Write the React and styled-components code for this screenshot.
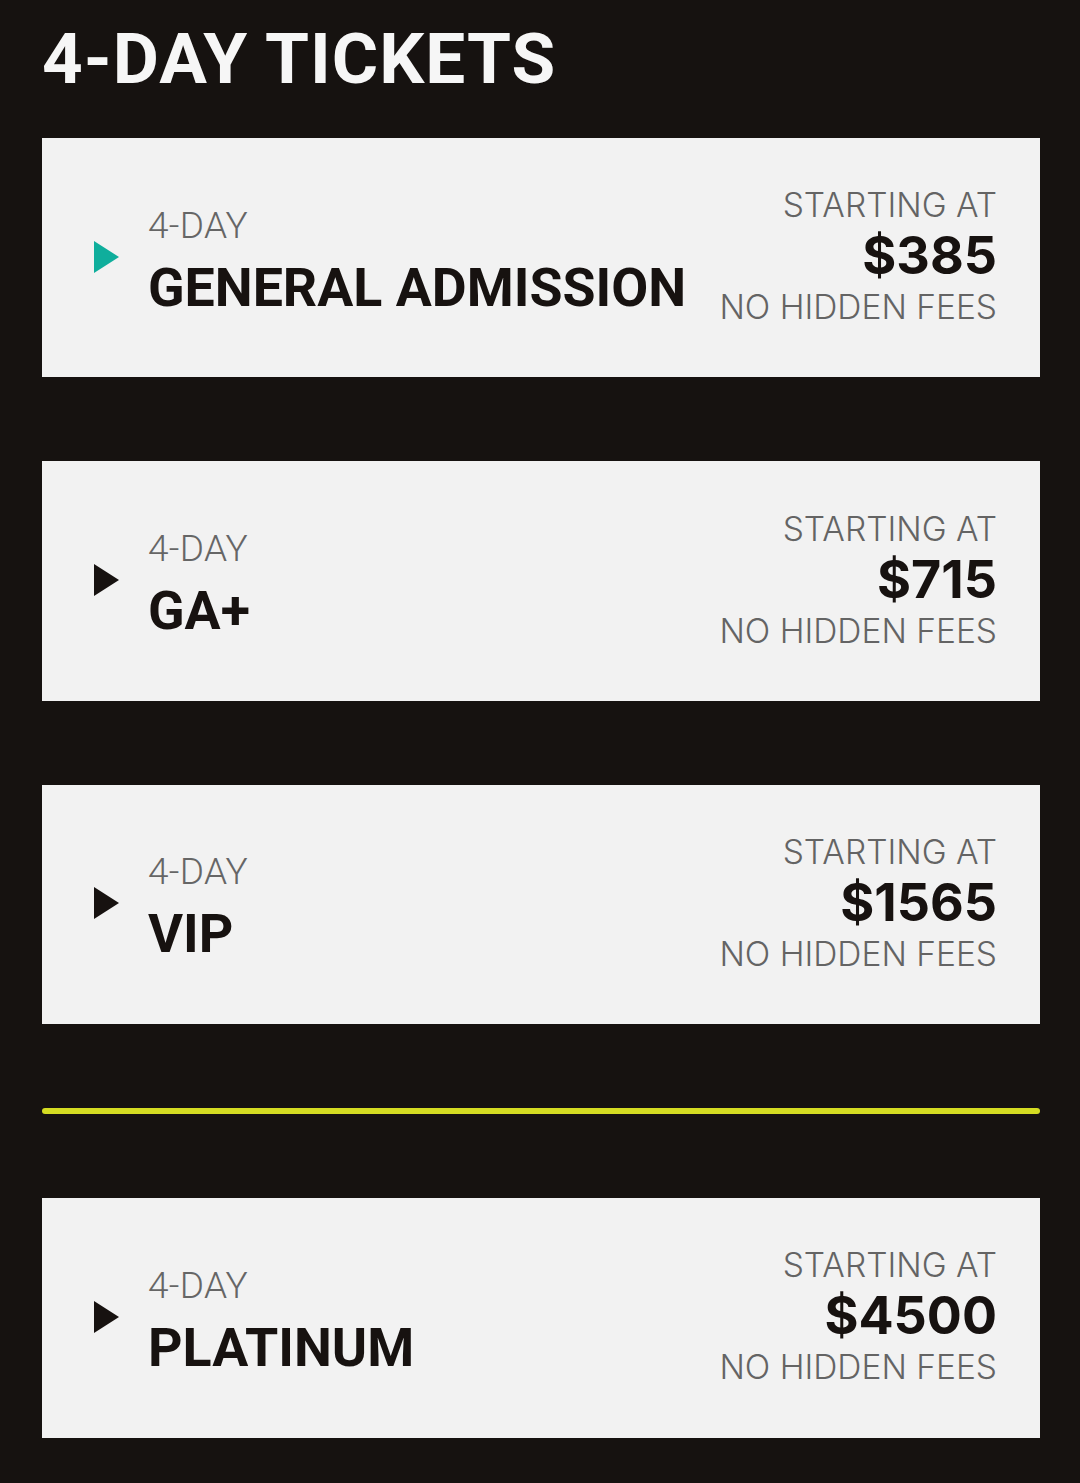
import React from "react";
import styled, { createGlobalStyle } from "styled-components";

const Global = createGlobalStyle`
  html, body { margin: 0; padding: 0; background: #161210; }
  body { font-family: Roboto, "Liberation Sans", sans-serif; }
`;

const Page = styled.main`
  width: 1080px;
  min-height: 1483px;
  box-sizing: border-box;
  padding: 16px 40px 46px 42px;
  background: #161210;
`;

const Title = styled.h1`
  margin: 0 0 36px;
  font-family: Roboto, "Liberation Sans", sans-serif;
  font-weight: 700;
  font-size: 71px;
  line-height: 86px;
  letter-spacing: 1px;
  color: #f6f6f6;
`;

const List = styled.div`
  display: flex;
  flex-direction: column;
  gap: 84px;
`;

const Card = styled.div`
  height: 239.4px;
  background: #f2f2f2;
  display: flex;
  align-items: center;
  justify-content: space-between;
  padding: 0 43px 0 52px;
  box-sizing: border-box;
`;

const Left = styled.div`
  display: flex;
  align-items: center;
  gap: 29px;
`;

const Arrow = styled.span`
  width: 0;
  height: 0;
  border-top: 16.5px solid transparent;
  border-bottom: 16.5px solid transparent;
  border-left: 25px solid ${(p) => (p.$active ? "#0fae9c" : "#171210")};
  flex: none;
  margin-top: -2px;
`;

const Names = styled.div`
  display: flex;
  flex-direction: column;
  padding-top: 12px;
`;

const Kicker = styled.span`
  font-family: Roboto, sans-serif;
  font-weight: 300;
  font-size: 37px;
  line-height: 44px;
  letter-spacing: 0.3px;
  color: #666666;
`;

const Name = styled.span`
  font-family: Roboto, sans-serif;
  font-weight: 700;
  font-size: 53.7px;
  line-height: 72px;
  margin-top: 4px;
  color: #171210;
`;

const Right = styled.div`
  display: flex;
  flex-direction: column;
  align-items: flex-end;
  text-align: right;
  margin-top: -3px;
`;

const Small = styled.span`
  font-family: Inter, sans-serif;
  font-weight: 300;
  font-size: 33.5px;
  line-height: 42px;
  color: #646464;
`;

const Price = styled.span`
  font-family: Inter, sans-serif;
  font-weight: 700;
  font-size: 52px;
  line-height: 60px;
  color: #171210;
`;

const Divider = styled.hr`
  margin: 0;
  border: none;
  height: 6px;
  border-radius: 3px;
  background: #d4dc22;
`;

const tickets = [
  { name: "GENERAL ADMISSION", price: "$385", active: true },
  { name: "GA+", price: "$715" },
  { name: "VIP", price: "$1565" },
  { divider: true },
  { name: "PLATINUM", price: "$4500" },
];

export default function App() {
  return (
    <Page>
      <Global />
      <Title>4-DAY TICKETS</Title>
      <List>
        {tickets.map((t, i) =>
          t.divider ? (
            <Divider key={i} />
          ) : (
            <Card key={i}>
              <Left>
                <Arrow $active={t.active} />
                <Names>
                  <Kicker>4-DAY</Kicker>
                  <Name>{t.name}</Name>
                </Names>
              </Left>
              <Right>
                <Small>STARTING AT</Small>
                <Price>{t.price}</Price>
                <Small>NO HIDDEN FEES</Small>
              </Right>
            </Card>
          )
        )}
      </List>
    </Page>
  );
}
